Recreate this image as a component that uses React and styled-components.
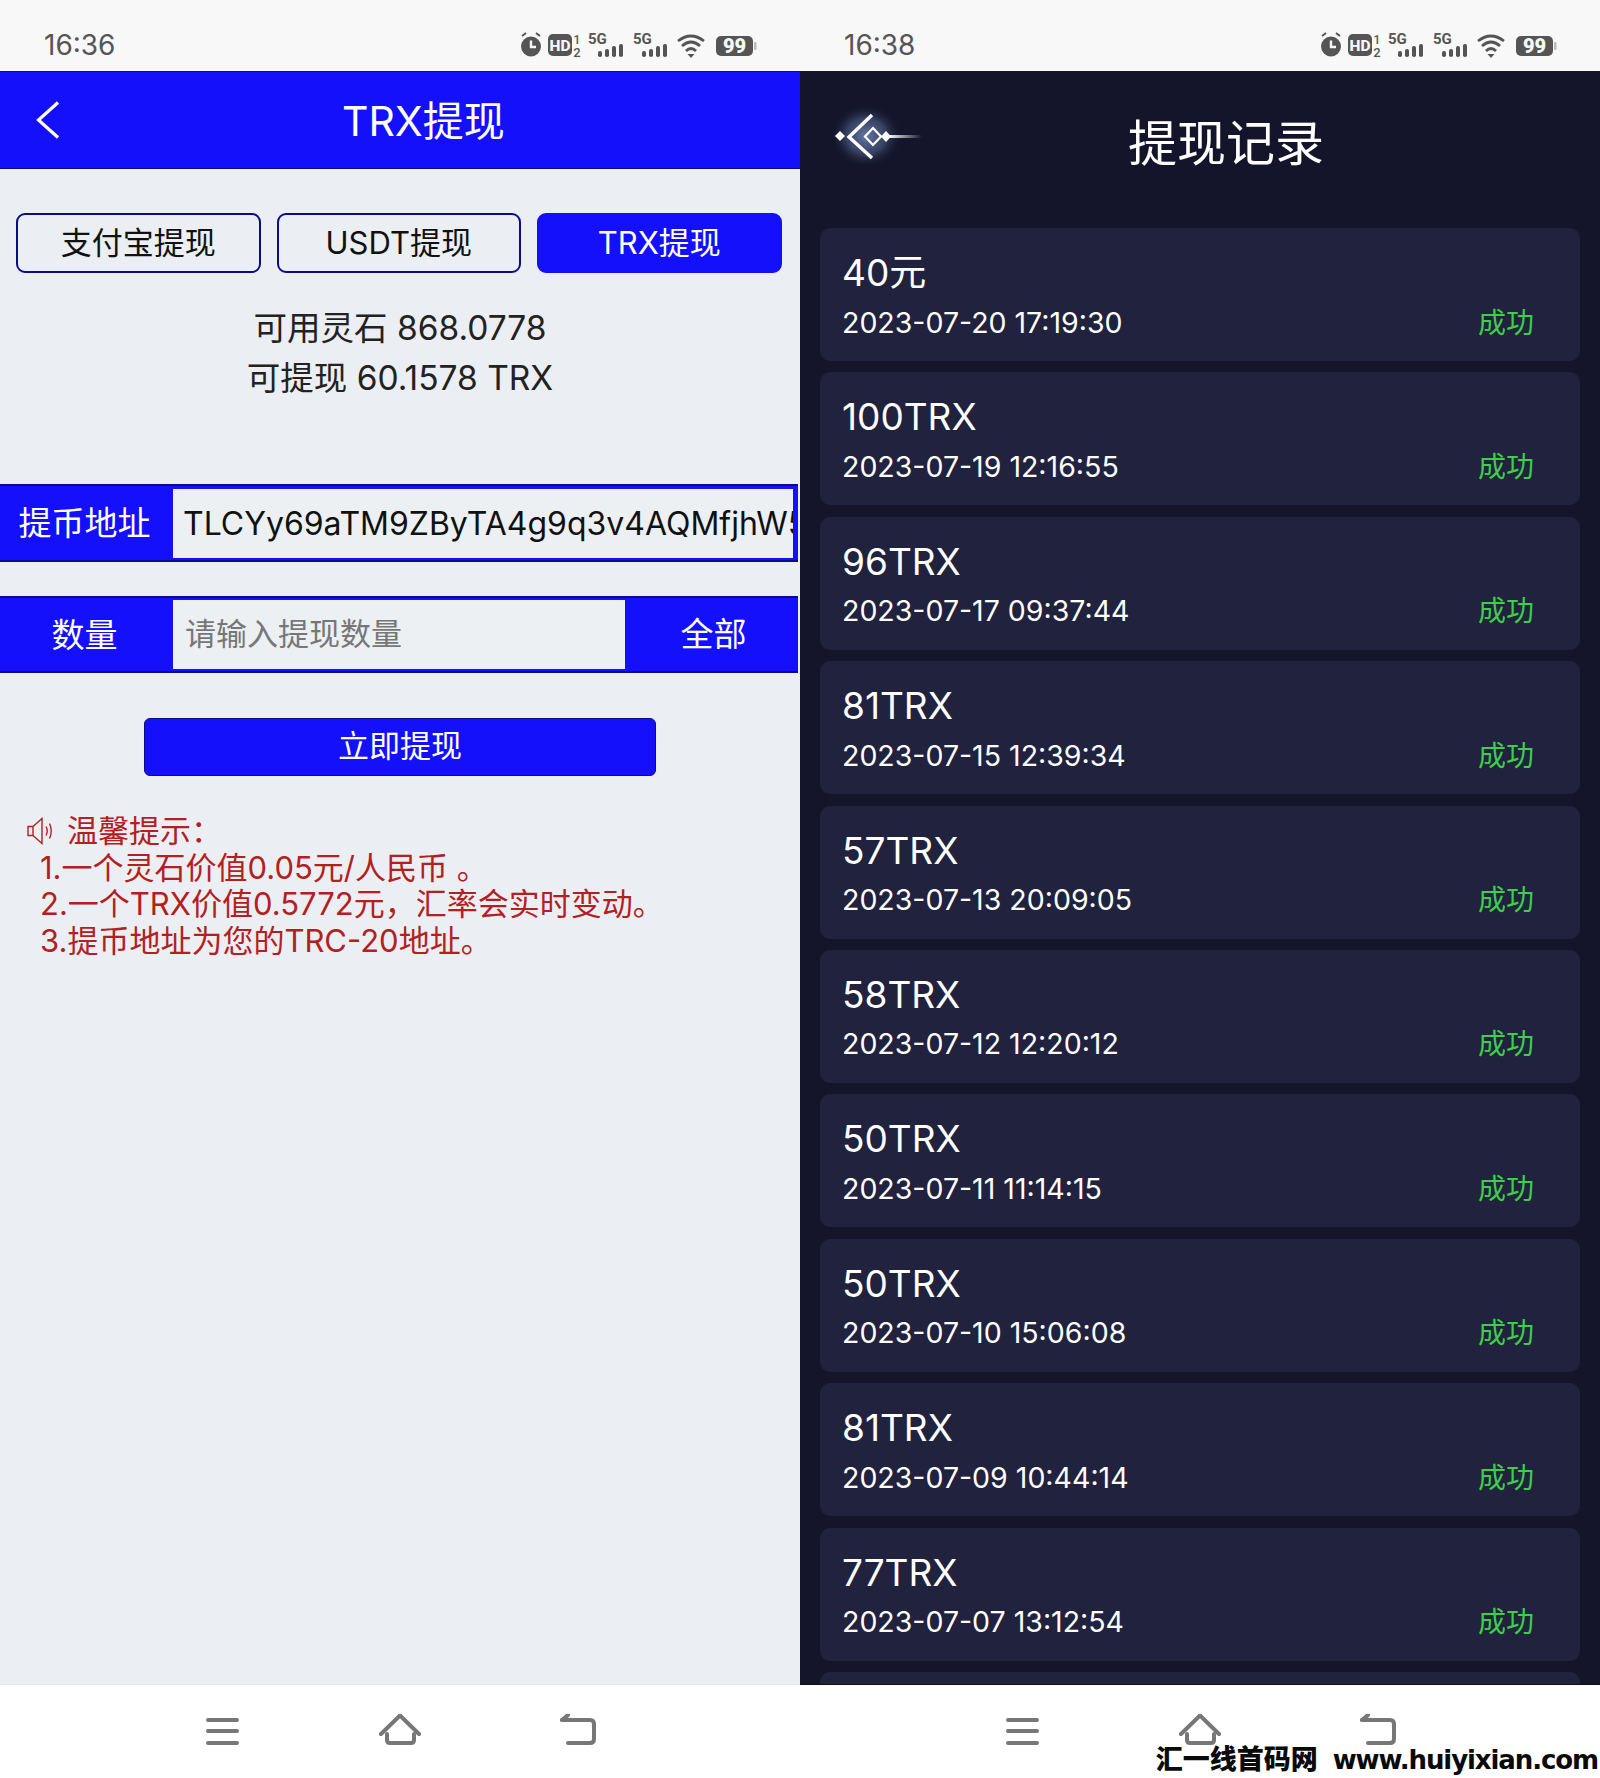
import React from "react";
import styled, { createGlobalStyle } from "styled-components";

const FONT = `"Inter", "Noto Sans CJK SC", sans-serif`;
const BLUE = "#1510fb";
const NAVY = "#0c0b8a";

const Global = createGlobalStyle`
  html, body { margin: 0; padding: 0; background: #fff; }
  * { box-sizing: border-box; }
  body { font-family: ${FONT}; }
`;

const Page = styled.div`
  display: flex;
  width: 1600px;
  height: 1778px;
  overflow: hidden;
`;
const Phone = styled.section`
  width: 800px;
  height: 1778px;
  display: flex;
  flex-direction: column;
  background: ${(p) => (p.$dark ? "#14152a" : "#ebeef2")};
`;
const StatusBar = styled.div`
  height: 71px;
  flex: none;
  background: #f8f8f8;
  padding: 30px 44px 0;
  display: flex;
  justify-content: space-between;
  align-items: flex-start;
`;
const Time = styled.span`
  font-size: 28px;
  line-height: 30px;
  color: #555;
`;
const StatusSvg = styled.svg`
  display: block;
  margin: -4px -2px 0 0;
  flex: none;
`;
const Content = styled.main`
  flex: 1;
  min-height: 0;
  overflow: hidden;
`;
const Header = styled.header`
  height: 98px;
  background: ${BLUE};
  border-top: 1px solid ${NAVY};
  border-bottom: 1px solid ${NAVY};
  display: flex;
  align-items: center;
  padding-left: 36px;
`;
const HeaderTitle = styled.h1`
  margin: 2px 0 0 282px;
  font-size: 41px;
  font-weight: 400;
  color: #fff;
  line-height: 50px;
`;
const Tabs = styled.div`
  display: flex;
  gap: 16px;
  padding: 44px 0 0 16px;
`;
const Tab = styled.div`
  width: 244.5px;
  height: 60px;
  padding-bottom: 5px;
  border: 2px solid ${(p) => (p.$active ? BLUE : NAVY)};
  border-radius: 9px;
  display: flex;
  align-items: center;
  justify-content: center;
  font-size: 31px;
  color: ${(p) => (p.$active ? "#fff" : "#111")};
  background: ${(p) => (p.$active ? BLUE : "transparent")};
`;
const Info = styled.div`
  margin-top: 30px;
  text-align: center;
  font-size: 33.5px;
  line-height: 50px;
  color: #222;
`;
const FieldRow = styled.div`
  width: 798px;
  height: ${(p) => p.$h}px;
  margin-top: ${(p) => p.$mt}px;
  background: ${BLUE};
  border-top: 2px solid ${NAVY};
  border-bottom: 2px solid ${NAVY};
  display: flex;
  align-items: center;
  padding-right: ${(p) => (p.$wide ? 5 : 0)}px;
`;
const FieldLabel = styled.label`
  width: 169px;
  margin-right: 4px;
  padding-bottom: 4px;
  flex: none;
  text-align: center;
  color: #fff;
  font-size: 33px;
`;
const FieldInput = styled.input`
  height: 69px;
  flex: ${(p) => (p.$wide ? 1 : "none")};
  width: ${(p) => (p.$wide ? "auto" : "452px")};
  min-width: 0;
  border: 0;
  outline: 0;
  padding: 0 0 ${(p) => (p.$wide ? 0 : 2)}px ${(p) => (p.$wide ? 10 : 12)}px;
  font-family: ${FONT};
  font-size: ${(p) => (p.$wide ? 32 : 31)}px;
  color: #111;
  background: #ecf0f3;
  &::placeholder { color: #777; opacity: 1; }
`;
const FieldAction = styled.span`
  flex: 1;
  padding: 0 0 5px 4px;
  text-align: center;
  color: #fff;
  font-size: 33px;
`;
const Submit = styled.button`
  display: block;
  width: 512px;
  height: 58px;
  margin: 45px 0 0 144px;
  padding: 0 0 7px;
  border: 1px solid ${NAVY};
  border-radius: 6px;
  background: ${BLUE};
  color: #fff;
  font-family: ${FONT};
  font-size: 31px;
`;
const Notice = styled.div`
  margin-top: 37px;
  padding-left: 27px;
  color: #b3201f;
  font-size: 31px;
  line-height: 36.6px;
`;
const NoticeHead = styled.div`
  display: flex;
  align-items: center;
  gap: 14px;
`;
const NoticeLine = styled.div`
  padding-left: 13px;
  white-space: nowrap;
`;
const NavBar = styled.nav`
  position: relative;
  height: 94px;
  flex: none;
  background: #fff;
  border-top: 1px solid ${(p) => (p.$dark ? "#111" : "#e4e6ea")};
`;
const NavIcons = styled.svg`
  display: block;
  margin-left: 200px;
  margin-top: 29px;
`;
const Watermark = styled.div`
  position: absolute;
  right: 2px;
  top: 61px;
  display: flex;
  align-items: center;
  gap: 15px;
  color: #0a0a0a;
  font-weight: 900;
  white-space: nowrap;
  line-height: 28px;
`;
const WatermarkCn = styled.span`
  font-size: 27px;
`;
const WatermarkUrl = styled.span`
  font-family: "DejaVu Sans", sans-serif;
  font-size: 26px;
  font-weight: 700;
  letter-spacing: -1.1px;
`;
const DarkHeader = styled.header`
  height: 157px;
  display: flex;
  align-items: flex-start;
  padding: 33px 0 0 30px;
`;
const DarkTitle = styled.h1`
  margin: 5px 0 0 198px;
  font-size: 49px;
  font-weight: 400;
  line-height: 70px;
  color: #fff;
`;
const List = styled.div`
  display: flex;
  flex-direction: column;
  gap: 11.4px;
  padding: 0 20px;
`;
const Card = styled.article`
  flex: none;
  height: 133px;
  padding: 21px 46px 0 22px;
  border-radius: 10px;
  background: #20223e;
  color: #fff;
`;
const Amount = styled.div`
  font-size: 37px;
  line-height: 48px;
`;
const CardRow = styled.div`
  display: flex;
  justify-content: space-between;
  align-items: center;
  margin-top: 1px;
  height: 48px;
`;
const DateText = styled.span`
  font-size: 28.5px;
`;
const Status = styled.span`
  font-size: 28px;
  margin-bottom: 3px;
  color: #3fcd4c;
`;

const StatusIcons = () => (
  <StatusSvg width="240" height="36" viewBox="0 -6 240 36" fill="#555">
    <circle cx="13" cy="14.5" r="10" />
    <path d="M4 4 8 1M22 4 18 1" stroke="#555" strokeWidth="2" fill="none" />
    <path d="M13 8.5v6.5h5" stroke="#f8f8f8" strokeWidth="2.4" fill="none" />
    <rect x="30" y="2" width="24" height="22" rx="5" />
    <text x="42" y="19" textAnchor="middle" fontSize="15.5" fontWeight="800" fill="#f8f8f8" fontFamily="Roboto">HD</text>
    <text x="59" y="12" textAnchor="middle" fontSize="12" fontWeight="500" fill="#555" fontFamily="Roboto">1</text>
    <text x="59" y="25" textAnchor="middle" fontSize="13" fontWeight="500" fill="#555" fontFamily="Roboto">2</text>
    <text x="70" y="12" fontSize="15" fontWeight="700" fill="#555" fontFamily="Roboto">5G</text>
    <rect x="80" y="19" width="4" height="6" rx="1.8" />
    <rect x="87" y="17" width="4" height="8" rx="1.8" />
    <rect x="94" y="14" width="4" height="11" rx="1.8" />
    <rect x="101" y="12" width="4" height="13" rx="1.8" />
    <text x="115" y="12" fontSize="15" fontWeight="700" fill="#555" fontFamily="Roboto">5G</text>
    <rect x="124" y="19" width="4" height="6" rx="1.8" />
    <rect x="131" y="17" width="4" height="8" rx="1.8" />
    <rect x="138" y="14" width="4" height="11" rx="1.8" />
    <rect x="145" y="12" width="4" height="13" rx="1.8" />
    <path d="M160 9Q173-1 186 9M164 14Q173 6 182 14M168 19Q173 14 178 19" fill="none" stroke="#555" strokeWidth="2.8" />
    <path d="M173 26l-3.5-4h7z" />
    <rect x="198" y="4" width="37" height="20" rx="5" />
    <rect x="236" y="10" width="2.5" height="8" rx="1" fill="#bbb" />
    <text x="216.5" y="21" textAnchor="middle" fontSize="20" fontWeight="900" fill="#f8f8f8" fontFamily="Roboto">99</text>
  </StatusSvg>
);

const StatusRow = ({ time }) => (
  <StatusBar>
    <Time>{time}</Time>
    <StatusIcons />
  </StatusBar>
);

const NavButtons = () => (
  <NavIcons width="400" height="40" viewBox="0 0 400 40" fill="none" stroke="#777" strokeWidth="4" strokeLinecap="round" strokeLinejoin="round">
    <path d="M8 6H37M8 17H37M8 29H37" />
    <path d="M181 18 200 -0.5 219 18" transform="translate(0 2)" />
    <path d="M187 20V26Q187 29 190 29H211Q214 29 214 26V20" />
    <path d="M362 6H390Q394 6 394 10V25Q394 29 390 29H368" />
    <path d="M362 6 368 1" />
  </NavIcons>
);

const Chevron = () => (
  <svg width="24" height="38" viewBox="0 0 24 38" fill="none" stroke="#fff" strokeWidth="3.2" style={{ flex: "none" }}>
    <path d="M22 1.5 2.5 19 22 36.5" />
  </svg>
);

const Speaker = () => (
  <svg width="26" height="28" viewBox="0 0 26 28" fill="none" stroke="#b3201f" strokeWidth="1.4" style={{ flex: "none" }}>
    <path d="M1 9.5H6V18.5H1ZM6 9.5 15 1.5V26.5L6 18.5" />
    <path d="M19 9.5Q21.5 14 19 18.5M22.5 6.5Q26 14 22.5 21.5" />
  </svg>
);

const Logo = () => (
  <svg width="100" height="60" viewBox="0 0 100 60" style={{ flex: "none" }}>
    <defs>
      <radialGradient id="glow">
        <stop offset="0" stopColor="#6f83b8" stopOpacity="0.9" />
        <stop offset="0.55" stopColor="#55658f" stopOpacity="0.55" />
        <stop offset="1" stopColor="#14152a" stopOpacity="0" />
      </radialGradient>
      <linearGradient id="tail">
        <stop offset="0" stopColor="#fff" />
        <stop offset="1" stopColor="#fff" stopOpacity="0" />
      </linearGradient>
    </defs>
    <ellipse cx="36" cy="32" rx="36" ry="32" fill="url(#glow)" />
    <path d="M10 27 15 32 10 37 5 32Z" fill="#fff" />
    <path d="M42 11 19 33 42 54" fill="none" stroke="#fff" strokeWidth="3.4" />
    <path d="M43 24 51 32.5 43 41 35 32.5Z" fill="none" stroke="#fff" strokeWidth="2.2" />
    <path d="M56 27 61 32.5 56 38 51 32.5Z" fill="#fff" />
    <rect x="58" y="31" width="34" height="3" fill="url(#tail)" />
  </svg>
);

const records = [
  ["40元", "2023-07-20 17:19:30"],
  ["100TRX", "2023-07-19 12:16:55"],
  ["96TRX", "2023-07-17 09:37:44"],
  ["81TRX", "2023-07-15 12:39:34"],
  ["57TRX", "2023-07-13 20:09:05"],
  ["58TRX", "2023-07-12 12:20:12"],
  ["50TRX", "2023-07-11 11:14:15"],
  ["50TRX", "2023-07-10 15:06:08"],
  ["81TRX", "2023-07-09 10:44:14"],
  ["77TRX", "2023-07-07 13:12:54"],
];

export default function App() {
  return (
    <Page>
      <Global />
      <Phone>
        <StatusRow time="16:36" />
        <Content>
          <Header>
            <Chevron />
            <HeaderTitle>TRX提现</HeaderTitle>
          </Header>
          <Tabs>
            <Tab>支付宝提现</Tab>
            <Tab>USDT提现</Tab>
            <Tab $active>TRX提现</Tab>
          </Tabs>
          <Info>
            <div>可用灵石 868.0778</div>
            <div>可提现 60.1578 TRX</div>
          </Info>
          <FieldRow $mt={81} $h={78} $wide>
            <FieldLabel>提币地址</FieldLabel>
            <FieldInput $wide readOnly value="TLCYy69aTM9ZByTA4g9q3v4AQMfjhW5T" />
          </FieldRow>
          <FieldRow $mt={34} $h={77}>
            <FieldLabel>数量</FieldLabel>
            <FieldInput placeholder="请输入提现数量" />
            <FieldAction>全部</FieldAction>
          </FieldRow>
          <Submit>立即提现</Submit>
          <Notice>
            <NoticeHead>
              <Speaker />
              <span>温馨提示：</span>
            </NoticeHead>
            <NoticeLine>1.一个灵石价值0.05元/人民币 。</NoticeLine>
            <NoticeLine>2.一个TRX价值0.5772元，汇率会实时变动。</NoticeLine>
            <NoticeLine>3.提币地址为您的TRC-20地址。</NoticeLine>
          </Notice>
        </Content>
        <NavBar>
          <NavButtons />
        </NavBar>
      </Phone>
      <Phone $dark>
        <StatusRow time="16:38" />
        <Content>
          <DarkHeader>
            <Logo />
            <DarkTitle>提现记录</DarkTitle>
          </DarkHeader>
          <List>
            {records.map(([amount, date]) => (
              <Card key={date}>
                <Amount>{amount}</Amount>
                <CardRow>
                  <DateText>{date}</DateText>
                  <Status>成功</Status>
                </CardRow>
              </Card>
            ))}
            <Card />
          </List>
        </Content>
        <NavBar $dark>
          <NavButtons />
          <Watermark>
            <WatermarkCn>汇一线首码网</WatermarkCn>
            <WatermarkUrl>www.huiyixian.com</WatermarkUrl>
          </Watermark>
        </NavBar>
      </Phone>
    </Page>
  );
}
